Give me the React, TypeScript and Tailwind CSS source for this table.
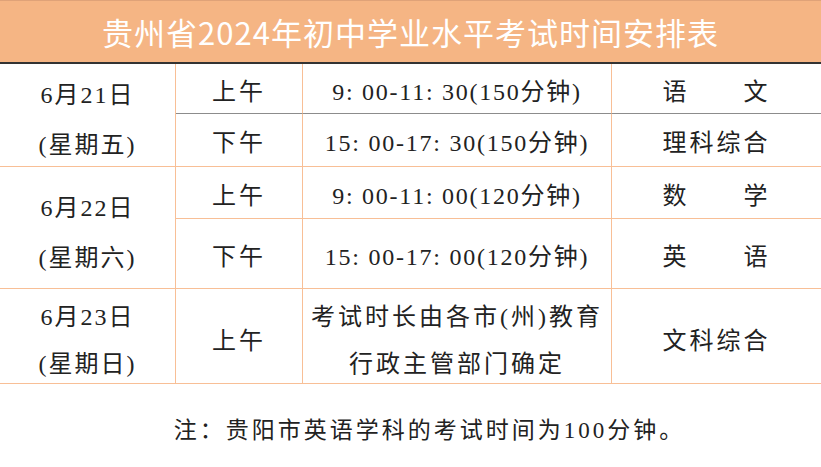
const FONT = { fontFamily: '"Liberation Serif", "Noto Sans CJK SC", serif' }

const cell = 'flex items-center justify-center border-r border-r-[#f8bf96] pt-[6px]'
const orangeB = 'border-b border-b-[#f8bf96]'
const greyB = 'border-b border-b-[#8c8c8c]'
const time = 'tracking-[1.75px]'

function Cell({ className, children }: { className: string; children: React.ReactNode }) {
  return <div className={`${cell} ${className}`}>{children}</div>
}

export default function App() {
  return (
    <div className="w-[821px] h-[467px] bg-white text-[#222] overflow-hidden">
      <div className="h-[64px] bg-[#f5b584] border-t border-t-[#dfa278] border-b-2 border-b-[#333] flex items-center justify-center">
        <h1
          className="text-white text-[31px] tracking-[1px] leading-none"
          style={{ fontFamily: '"Noto Sans CJK SC", "Noto Sans", sans-serif' }}
        >
          贵州省2024年初中学业水平考试时间安排表
        </h1>
      </div>

      <div
        className="grid grid-cols-[176px_127px_309px_1fr] grid-rows-[50px_53px_52px_70px_95px] text-[24px] tracking-[3px]"
        style={FONT}
      >
        <Cell className={`row-span-2 flex-col leading-[50px] pt-[10px] tracking-[2px] ${orangeB}`}>
          <span>6月21日</span>
          <span>(星期五)</span>
        </Cell>
        <Cell className={greyB}>上午</Cell>
        <Cell className={`${greyB} ${time}`}>9: 00-11: 30(150分钟)</Cell>
        <Cell className={`${greyB} border-r-0`}>语　　文</Cell>

        <Cell className={orangeB}>下午</Cell>
        <Cell className={`${orangeB} ${time}`}>15: 00-17: 30(150分钟)</Cell>
        <Cell className={`${orangeB} border-r-0`}>理科综合</Cell>

        <Cell className={`row-span-2 flex-col leading-[50px] pt-[10px] tracking-[2px] ${orangeB}`}>
          <span>6月22日</span>
          <span>(星期六)</span>
        </Cell>
        <Cell className={orangeB}>上午</Cell>
        <Cell className={`${orangeB} ${time}`}>9: 00-11: 00(120分钟)</Cell>
        <Cell className={`${orangeB} border-r-0`}>数　　学</Cell>

        <Cell className={orangeB}>下午</Cell>
        <Cell className={`${orangeB} ${time}`}>15: 00-17: 00(120分钟)</Cell>
        <Cell className={`${orangeB} border-r-0`}>英　　语</Cell>

        <Cell className={`flex-col leading-[47px] pt-[10px] tracking-[2px] ${orangeB}`}>
          <span>6月23日</span>
          <span>(星期日)</span>
        </Cell>
        <Cell className={`${orangeB} pt-[10px]`}>上午</Cell>
        <Cell className={`flex-col leading-[47px] pt-[10px] ${orangeB}`}>
          <span>考试时长由各市(州)教育</span>
          <span>行政主管部门确定</span>
        </Cell>
        <Cell className={`${orangeB} border-r-0 pt-[10px]`}>文科综合</Cell>
      </div>

      <p className="text-center text-[23px] tracking-[3px] mt-[30px] pl-[38px]" style={FONT}>
        注：贵阳市英语学科的考试时间为100分钟。
      </p>
    </div>
  )
}
